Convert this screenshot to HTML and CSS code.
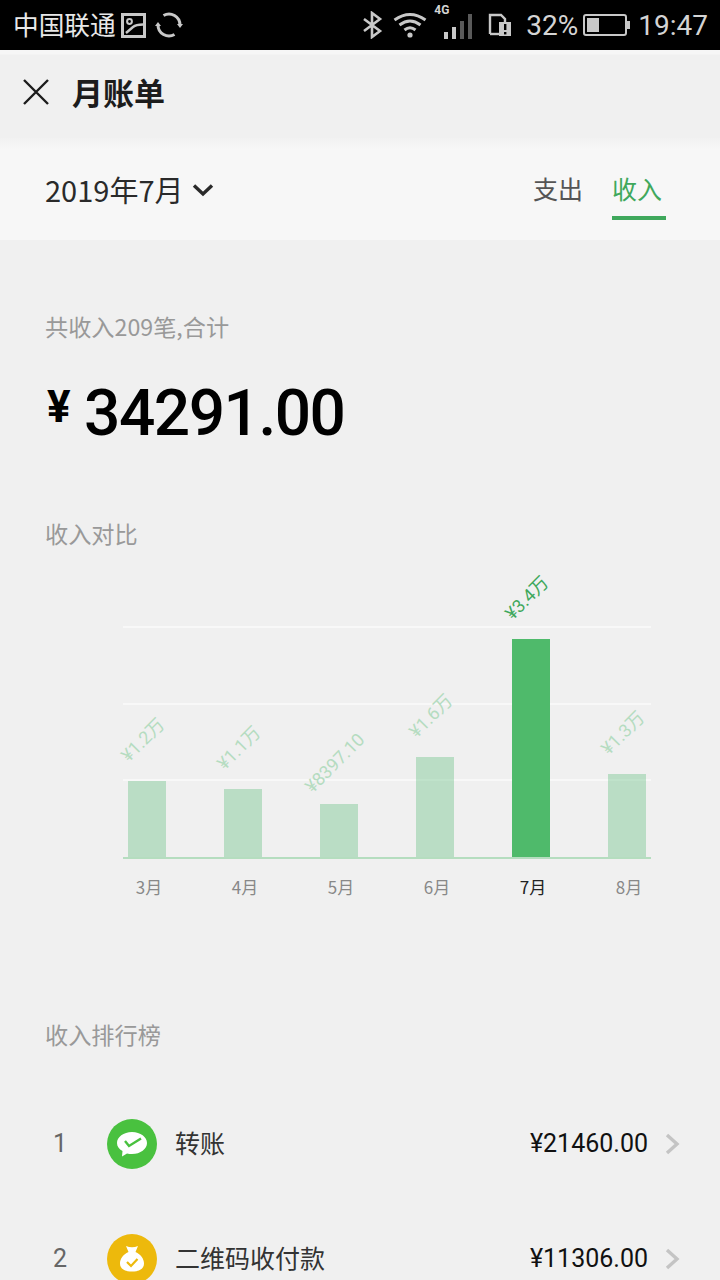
FILE: index.html
```html
<!DOCTYPE html>
<html lang="zh-CN">
  <head>
    <meta charset="UTF-8" />
    <meta name="viewport" content="width=device-width, initial-scale=1.0" />
    <title>月账单</title>
    <link rel="stylesheet" href="styles.css">
  </head>
  <body>
    <div class="status-bar">
      <div class="status-left">
        <span class="carrier">中国联通</span>
        <svg class="icon-pic" width="25" height="25" viewBox="0 0 25 25" fill="none" stroke="#c8c8c8" stroke-width="3">
          <rect x="1.500" y="1.500" width="22" height="22" />
          <circle cx="8.500" cy="8.500" r="2.400" stroke-width="2" />
          <path d="M5 20 L12 14 Q15 11.500 22 11.500" stroke-width="2.400" />
        </svg>
        <svg class="icon-sync" width="28" height="28" viewBox="0 0 28 28" fill="none" stroke="#c8c8c8" stroke-width="3">
          <path d="M8.500 4.500 A11 11 0 0 1 25 14" />
          <path d="M19.500 23.500 A11 11 0 0 1 3 14" />
          <path d="M22 13 L28 13 L25 17 Z M0 15 L6 15 L3 11 Z" fill="#c8c8c8" stroke="none" />
        </svg>
      </div>
      <div class="status-right">
        <svg width="22" height="28" viewBox="0 0 22 28" fill="none" stroke="#c8c8c8" stroke-width="2.600">
          <path d="M2 8 L18 20 L10 26 L10 2 L18 8 L2 20" />
        </svg>
        <svg class="icon-wifi" width="34" height="26" viewBox="0 0 34 26" fill="none" stroke="#c8c8c8" stroke-width="3">
          <path d="M1.500 8 Q17 -3 32.500 8" />
          <path d="M6.500 13 Q17 5 27.500 13" />
          <path d="M11.500 18 Q17 13.500 22.500 18" />
          <circle cx="17" cy="23" r="2.600" fill="#c8c8c8" stroke="none" />
        </svg>
        <div class="signal">
          <span class="signal-tag">4G</span>
          <svg width="34" height="26" viewBox="0 0 34 26" fill="#c8c8c8">
            <rect x="3" y="18" width="4" height="7" />
            <rect x="11" y="13" width="4" height="12" />
            <rect x="19" y="7" width="4" height="18" fill="#5a5a5a" />
            <rect x="27" y="0" width="4" height="25" fill="#5a5a5a" />
          </svg>
        </div>
        <svg class="icon-sim" width="24" height="26" viewBox="0 0 24 26" fill="none" stroke="#c8c8c8" stroke-width="2.400">
          <path d="M2 22 V3 H13 L17 7 V10" />
          <path d="M2 22 H11" />
          <rect x="11" y="10" width="12" height="14" fill="#c8c8c8" stroke="none" />
          <rect x="16" y="12" width="2.400" height="6" fill="#000" stroke="none" />
          <rect x="16" y="20" width="2.400" height="2.400" fill="#000" stroke="none" />
        </svg>
        <span class="battery-pct">32%</span>
        <div class="battery"><div class="battery-fill"></div></div>
        <span class="clock">19:47</span>
      </div>
    </div>

    <nav class="top-nav">
      <svg width="28" height="28" viewBox="0 0 28 28" stroke="#1c1c1c" stroke-width="2.400" fill="none">
        <path d="M2 2 L26 26 M26 2 L2 26" />
      </svg>
      <h1>月账单</h1>
    </nav>

    <div class="filter-row">
      <div class="month-picker">
        <span>2019年7月</span>
        <svg class="month-caret" width="22" height="14" viewBox="0 0 22 14" fill="none" stroke="#2a2a2a" stroke-width="3.400">
          <path d="M2 2.500 L11 11 L20 2.500" />
        </svg>
      </div>
      <div class="tabs">
        <span class="tab">支出</span>
        <span class="tab tab-active">收入</span>
      </div>
    </div>

    <section class="summary">
      <p class="section-label">共收入209笔,合计</p>
      <div class="total">
        <span class="total-sign">¥</span>
        <span class="total-num">34291.00</span>
      </div>
    </section>

    <section class="compare">
      <p class="section-label">收入对比</p>
      <div class="chart">
        <div class="grid-line line-1"></div>
        <div class="grid-line line-2"></div>
        <div class="grid-line line-3"></div>
        <div class="bars">
          <div class="bar" style="height: 76px"><span class="bar-value">¥1.2万</span></div>
          <div class="bar" style="height: 68px"><span class="bar-value">¥1.1万</span></div>
          <div class="bar" style="height: 53px"><span class="bar-value">¥8397.10</span></div>
          <div class="bar" style="height: 100px"><span class="bar-value">¥1.6万</span></div>
          <div class="bar bar-active" style="height: 218px"><span class="bar-value">¥3.4万</span></div>
          <div class="bar" style="height: 83px"><span class="bar-value">¥1.3万</span></div>
        </div>
        <div class="months">
          <span>3月</span>
          <span>4月</span>
          <span>5月</span>
          <span>6月</span>
          <span class="month-active">7月</span>
          <span>8月</span>
        </div>
      </div>
    </section>

    <section class="ranking">
      <p class="section-label">收入排行榜</p>
      <div class="rank-row">
        <span class="rank-no">1</span>
        <span class="rank-icon icon-green">
          <svg width="34" height="28" viewBox="0 0 34 28">
            <path d="M17 2 C25.500 2 32 7 32 13 C32 19 25.500 24 17 24 Q14.500 24 12 23.400 L7 26.500 L7.500 21 C4 19 2 16.500 2 13 C2 7 8.500 2 17 2 Z" fill="#fff" />
            <path d="M10 11 L14 16 L26 8.500" fill="none" stroke="#49c13f" stroke-width="2.400" />
          </svg>
        </span>
        <span class="rank-name">转账</span>
        <span class="rank-amount">¥21460.00</span>
        <svg class="rank-arrow" width="16" height="22" viewBox="0 0 16 22" fill="none" stroke="#c4c4c4" stroke-width="3.400">
          <path d="M3 2 L13 11 L3 20" />
        </svg>
      </div>
      <div class="rank-row">
        <span class="rank-no">2</span>
        <span class="rank-icon icon-yellow">
          <svg width="26" height="27" viewBox="0 0 26 27">
            <path d="M7 1 Q13 3.500 19 1 L16.500 7 C22 9.500 25 14 25 18.500 C25 24 20 26.500 13 26.500 C6 26.500 1 24 1 18.500 C1 14 4 9.500 9.500 7 Z" fill="#fff" />
            <path d="M8 17 L12 21 L18.500 14" fill="none" stroke="#edb90c" stroke-width="2.200" />
          </svg>
        </span>
        <span class="rank-name">二维码收付款</span>
        <span class="rank-amount">¥11306.00</span>
        <svg class="rank-arrow" width="16" height="22" viewBox="0 0 16 22" fill="none" stroke="#c4c4c4" stroke-width="3.400">
          <path d="M3 2 L13 11 L3 20" />
        </svg>
      </div>
    </section>
  </body>
</html>
```

FILE: styles.css
```css
* {
  box-sizing: border-box;
  margin: 0;
  padding: 0;
}

html,
body {
  height: 1280px;
  overflow: hidden;
}

body {
  background: #f0f0f0;
  font-family: "Noto Sans CJK SC", "Noto Sans", sans-serif;
  color: #333;
}

.status-bar {
  height: 50px;
  background: #000;
  display: flex;
  justify-content: space-between;
  align-items: center;
  padding: 0 12px 0 13px;
  color: #d4d4d4;
}

.status-left,
.status-right {
  display: flex;
  align-items: center;
}

.carrier {
  font-size: 25.700px;
  line-height: 36px;
  padding-bottom: 2px;
  color: #e8e8e8;
  margin-right: 5px;
}

.icon-sync {
  margin-left: 9px;
}

.icon-wifi {
  margin-left: 9px;
}

.signal {
  position: relative;
  margin-left: 14px;
  padding-top: 8px;
}

.signal-tag {
  position: absolute;
  left: -7px;
  top: -3px;
  font-family: "Roboto", sans-serif;
  font-size: 12px;
  font-weight: 700;
}

.icon-sim {
  margin-left: 13px;
}

.battery-pct {
  font-family: "Roboto", sans-serif;
  font-size: 28px;
  margin-left: 14px;
}

.battery {
  width: 44px;
  height: 22px;
  margin-left: 5px;
  border: 2px solid #c8c8c8;
  border-radius: 3px;
  padding: 2px;
  position: relative;
}

.battery::after {
  content: "";
  position: absolute;
  right: -5px;
  top: 5px;
  width: 3px;
  height: 8px;
  background: #c8c8c8;
}

.battery-fill {
  width: 12px;
  height: 100%;
  background: #c8c8c8;
}

.clock {
  font-family: "Roboto", sans-serif;
  font-size: 28px;
  margin-left: 11px;
}

.top-nav {
  height: 88px;
  display: flex;
  align-items: center;
  padding: 0 0 5px 22px;
  background: linear-gradient(#f6f6f6 0, #f6f6f6 4px, #f0f0f0 5px);
}

.top-nav h1 {
  font-size: 31px;
  font-weight: 700;
  color: #1c1c1c;
  margin-left: 22px;
}

.filter-row {
  height: 102px;
  background: linear-gradient(#f1f1f1, #f7f7f7 12px);
  display: flex;
  justify-content: space-between;
  padding: 0 54px 0 45px;
}

.month-picker {
  display: flex;
  align-items: center;
  gap: 9px;
  font-size: 29px;
  color: #2a2a2a;
  height: 102px;
}

.month-caret {
  margin-top: 2px;
}

.tabs {
  display: flex;
  gap: 29px;
  padding-top: 32px;
}

.tab {
  font-size: 25px;
  line-height: 36px;
  height: 50px;
  color: #555;
}

.tab-active {
  color: #3fa85c;
  padding-right: 4px;
  border-bottom: 4px solid #3fa85c;
}

.summary {
  padding: 68px 45px 0;
}

.section-label {
  font-size: 23.200px;
  line-height: 36px;
  color: #999;
}

.total {
  display: flex;
  align-items: flex-start;
  margin-top: 31px;
  height: 78px;
  color: #000;
}

.total-sign {
  font-family: "Roboto", sans-serif;
  font-size: 44px;
  font-weight: 700;
  line-height: 44px;
  width: 37px;
  margin: 10px 0 0 2px;
}

.total-num {
  font-family: "Roboto", sans-serif;
  font-size: 64px;
  font-weight: 500;
  line-height: 78px;
  letter-spacing: -1.500px;
}

.compare {
  padding: 62px 0 0 45px;
}

.chart {
  position: relative;
  margin: 0 0 0 78px;
  width: 528px;
  padding-top: 76px;
}

.grid-line {
  position: absolute;
  left: 0;
  right: 0;
  height: 2px;
  background: #f8f8f8;
}

.line-1 {
  top: 75px;
}

.line-2 {
  top: 152px;
}

.line-3 {
  top: 228px;
}

.bars {
  position: relative;
  height: 232px;
  display: flex;
  align-items: flex-end;
  gap: 58px;
  padding-left: 5px;
  border-bottom: 2px solid #b5ddbf;
}

.bar {
  position: relative;
  width: 38px;
  background: rgba(96, 190, 124, 0.37);
}

.bar-active {
  background: #4fba6b;
}

.bar-value {
  position: absolute;
  left: calc(50% - 4px);
  bottom: calc(100% + 30px);
  font-family: "Roboto", "Noto Sans CJK SC", sans-serif;
  font-size: 18px;
  line-height: 22px;
  white-space: nowrap;
  color: #b5dcc0;
  transform: translateX(-50%) rotate(-45deg);
}

.bar-active .bar-value {
  color: #3fa85c;
}

.months {
  display: flex;
  gap: 58px;
  padding-left: 7px;
  margin-top: 16px;
}

.months span {
  width: 38px;
  text-align: center;
  font-size: 17px;
  line-height: 24px;
  color: #888;
  white-space: nowrap;
}

.months .month-active {
  color: #222;
}

.ranking {
  padding: 117px 40px 0 45px;
}

.rank-row {
  height: 115px;
  display: flex;
  align-items: center;
}

.ranking .section-label {
  margin-bottom: 34px;
}

.rank-no {
  width: 62px;
  padding-left: 8px;
  font-family: "Roboto", sans-serif;
  font-size: 25px;
  color: #666;
}

.rank-icon {
  width: 50px;
  height: 50px;
  border-radius: 50%;
  display: flex;
  align-items: center;
  justify-content: center;
}

.icon-green {
  background: #49c13f;
}

.icon-yellow {
  background: #edb90c;
}

.rank-name {
  flex: 1;
  margin-left: 18px;
  padding-bottom: 4px;
  font-size: 25px;
  color: #333;
}

.rank-amount {
  font-family: "Roboto", sans-serif;
  font-size: 25px;
  color: #111;
  margin-right: 16px;
}
```
